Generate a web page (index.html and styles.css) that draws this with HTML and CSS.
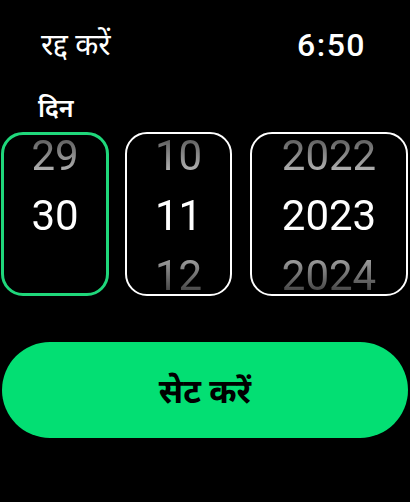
FILE: index.html
```html
<!DOCTYPE html>
<html lang="hi">
<head>
    <meta charset="UTF-8">
    <meta name="viewport" content="width=device-width, initial-scale=1.0">
    <title>तारीख सेट करें</title>
    <link rel="stylesheet" href="styles.css">
</head>
<body>
    <div class="screen">
        <div class="top-bar">
            <span class="cancel">रद्द करें</span>
            <span class="clock">6:50</span>
        </div>
        <div class="field-label">दिन</div>
        <div class="pickers">
            <div class="wheel wheel-day active">
                <div class="rows">
                    <div class="row">29</div>
                    <div class="row current">30</div>
                    <div class="row"></div>
                </div>
            </div>
            <div class="wheel wheel-month">
                <div class="rows">
                    <div class="row">10</div>
                    <div class="row current">11</div>
                    <div class="row">12</div>
                </div>
            </div>
            <div class="wheel wheel-year">
                <div class="rows">
                    <div class="row">2022</div>
                    <div class="row current">2023</div>
                    <div class="row">2024</div>
                </div>
            </div>
        </div>
        <button class="set-button">सेट करें</button>
    </div>
</body>
</html>
```

FILE: styles.css
```css
body {
    margin: 0;
    background-color: #000000;
    color: #ffffff;
    font-family: Roboto, "Noto Sans", "Noto Sans Devanagari", sans-serif;
}
.screen {
    width: 410px;
    height: 502px;
    display: flex;
    flex-direction: column;
}
.top-bar {
    display: flex;
    justify-content: space-between;
    align-items: center;
    padding: 26px 44px 0 41px;
    height: 38px;
}
.cancel {
    font-size: 30px;
    line-height: 38px;
}
.clock {
    font-size: 32px;
    font-weight: 500;
    letter-spacing: 1.5px;
}
.field-label {
    margin-top: 30px;
    padding-left: 38px;
    font-size: 25px;
    font-weight: 600;
    height: 38px;
    line-height: 30px;
}
.pickers {
    display: flex;
    gap: 16px;
    padding-left: 1px;
}
.wheel {
    box-sizing: border-box;
    height: 164px;
    border: 2px solid #ffffff;
    border-radius: 22px;
    overflow: hidden;
}
.wheel.active {
    border: 3px solid #1fd77b;
}
.wheel-day {
    width: 108px;
}
.wheel-month {
    width: 107px;
}
.wheel-year {
    width: 158px;
    margin-left: 2px;
}
.rows {
    margin-top: -8px;
    -webkit-mask-image: linear-gradient(to bottom, rgba(0,0,0,0.3) 0%, rgba(0,0,0,0.85) 25%, #000 36%, #000 64%, rgba(0,0,0,0.8) 72%, rgba(0,0,0,0.15) 100%);
    mask-image: linear-gradient(to bottom, rgba(0,0,0,0.3) 0%, rgba(0,0,0,0.85) 25%, #000 36%, #000 64%, rgba(0,0,0,0.8) 72%, rgba(0,0,0,0.15) 100%);
}
.wheel.active .rows {
    margin-top: -9px;
}
.row {
    height: 60px;
    line-height: 60px;
    text-align: center;
    font-size: 42px;
    color: #d0d0d0;
}
.row.current {
    color: #ffffff;
}
.set-button {
    margin: 46px 2px 0 2px;
    height: 96px;
    border: none;
    border-radius: 48px;
    background-color: #03df73;
    color: #000000;
    font-family: Roboto, "Noto Sans", "Noto Sans Devanagari", sans-serif;
    font-size: 33px;
    font-weight: 700;
}
```
